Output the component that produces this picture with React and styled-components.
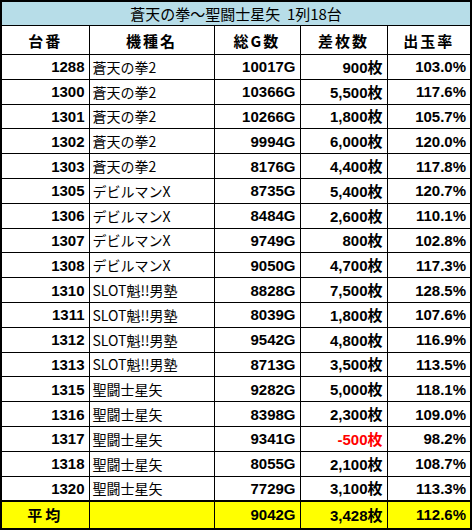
import React from 'react';
import styled, { createGlobalStyle } from 'styled-components';

const GlobalStyle = createGlobalStyle`
  html, body {
    margin: 0;
    padding: 0;
    background: #ffffff;
  }
  body {
    font-family: 'Liberation Sans', 'Noto Sans CJK JP', sans-serif;
    color: #000;
  }
`;

const rows = [
  ['1288', '蒼天の拳2', '10017G', '900', '103.0%'],
  ['1300', '蒼天の拳2', '10366G', '5,500', '117.6%'],
  ['1301', '蒼天の拳2', '10266G', '1,800', '105.7%'],
  ['1302', '蒼天の拳2', '9994G', '6,000', '120.0%'],
  ['1303', '蒼天の拳2', '8176G', '4,400', '117.8%'],
  ['1305', 'デビルマンX', '8735G', '5,400', '120.7%'],
  ['1306', 'デビルマンX', '8484G', '2,600', '110.1%'],
  ['1307', 'デビルマンX', '9749G', '800', '102.8%'],
  ['1308', 'デビルマンX', '9050G', '4,700', '117.3%'],
  ['1310', 'SLOT魁!!男塾', '8828G', '7,500', '128.5%'],
  ['1311', 'SLOT魁!!男塾', '8039G', '1,800', '107.6%'],
  ['1312', 'SLOT魁!!男塾', '9542G', '4,800', '116.9%'],
  ['1313', 'SLOT魁!!男塾', '8713G', '3,500', '113.5%'],
  ['1315', '聖闘士星矢', '9282G', '5,000', '118.1%'],
  ['1316', '聖闘士星矢', '8398G', '2,300', '109.0%'],
  ['1317', '聖闘士星矢', '9341G', '-500', '98.2%'],
  ['1318', '聖闘士星矢', '8055G', '2,100', '108.7%'],
  ['1320', '聖闘士星矢', '7729G', '3,100', '113.3%'],
];

const Sheet = styled.table`
  width: 470px;
  border-collapse: collapse;
  table-layout: fixed;
  border: 2px solid #000;
`;

const TitleCell = styled.th`
  height: 23px;
  padding: 0;
  background: #b7dde8;
  border: 1px solid #000;
  font-family: 'Noto Sans CJK JP', sans-serif;
  font-size: 15px;
  font-weight: 400;
  text-align: center;
  line-height: 1;
`;

const HeadCell = styled.th`
  height: 28px;
  padding: 0;
  border: 1px solid #000;
  font-family: 'Noto Sans CJK JP', sans-serif;
  font-size: 15px;
  font-weight: 700;
  letter-spacing: 2px;
  text-align: center;
  line-height: 1;
`;

const Row = styled.tr`
  height: ${(p) => (p.$avg ? '28px' : '24.8px')};
  background: ${(p) => (p.$avg ? '#ffff00' : '#ffffff')};
  border-top: ${(p) => (p.$avg ? '2px solid #000' : '1px solid #000')};
`;

const Cell = styled.td`
  padding: ${(p) => (p.$align === 'left' ? '0 0 0 3px' : p.$align === 'center' ? '0' : '0 4px 0 0')};
  border: 1px solid #000;
  text-align: ${(p) => p.$align || 'right'};
  font-family: ${(p) =>
    p.$name ? "'Noto Sans CJK JP', sans-serif" : "'Liberation Sans', 'Noto Sans CJK JP', sans-serif"};
  font-size: ${(p) => (p.$name ? '14px' : '15px')};
  font-weight: ${(p) => (p.$name ? 400 : 700)};
  letter-spacing: ${(p) => (p.$spaced ? '3px' : '0')};
  color: ${(p) => (p.$neg ? '#ff0000' : '#000')};
  white-space: nowrap;
  overflow: hidden;
  line-height: 1;
`;

const Mai = styled.span`
  font-family: 'Noto Sans CJK JP', sans-serif;
  font-weight: 700;
`;

const Coins = ({ value }) => (
  <>
    {value}
    <Mai>枚</Mai>
  </>
);

export default function App() {
  return (
    <>
      <GlobalStyle />
      <Sheet>
        <colgroup>
          <col style={{ width: 88 }} />
          <col style={{ width: 125 }} />
          <col style={{ width: 86 }} />
          <col style={{ width: 87 }} />
          <col style={{ width: 84 }} />
        </colgroup>
        <thead>
          <tr>
            <TitleCell colSpan={5}>蒼天の拳～聖闘士星矢&nbsp;&nbsp;1列18台</TitleCell>
          </tr>
          <tr>
            <HeadCell>台番</HeadCell>
            <HeadCell>機種名</HeadCell>
            <HeadCell>総G数</HeadCell>
            <HeadCell>差枚数</HeadCell>
            <HeadCell>出玉率</HeadCell>
          </tr>
        </thead>
        <tbody>
          {rows.map(([no, name, games, diff, rate]) => (
            <Row key={no}>
              <Cell>{no}</Cell>
              <Cell $align='left' $name>
                {name}
              </Cell>
              <Cell>{games}</Cell>
              <Cell $neg={diff.startsWith('-')}>
                <Coins value={diff} />
              </Cell>
              <Cell>{rate}</Cell>
            </Row>
          ))}
          <Row $avg>
            <Cell $align='center' $spaced>
              <Mai>平均</Mai>
            </Cell>
            <Cell />
            <Cell>9042G</Cell>
            <Cell>
              <Coins value='3,428' />
            </Cell>
            <Cell>112.6%</Cell>
          </Row>
        </tbody>
      </Sheet>
    </>
  );
}
